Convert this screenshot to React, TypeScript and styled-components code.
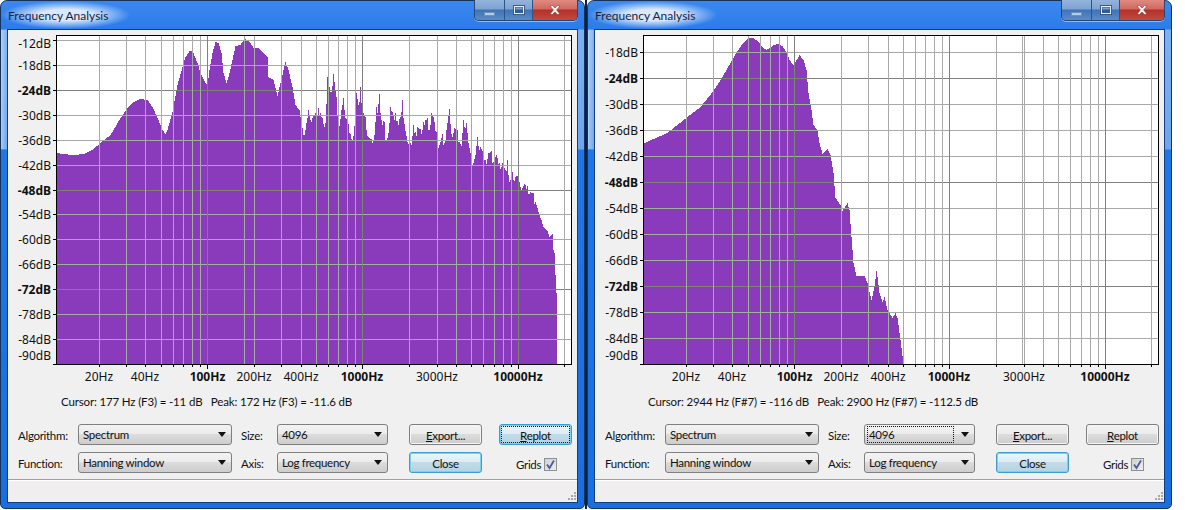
import React, { FC } from 'react';
import styled, { createGlobalStyle } from 'styled-components';

const uiFont = `Lato, "Liberation Sans", sans-serif`;

const GlobalStyle = createGlobalStyle`
  html, body {
    margin: 0;
    padding: 0;
    background: #fff;
  }
  body {
    font-family: ${uiFont};
    font-size: 11.5px;
    letter-spacing: -0.3px;
    color: #111;
  }
`;

type Point = [number, number];

interface PlotData {
  labels: string[];
  firstY: number;
  stepY: number;
  cursorX: number;
  outline: Point[];
  jitterFrom: number;
  jitterTo: number;
  cursorText: string;
}

const PLOT = { left: 56, right: 572, top: 35, bottom: 364 };

const leftOutline: Point[] = [
  [57, 153], [63, 154], [73, 155], [83, 154], [93, 149], [100, 143], [110, 135], [120, 118], [127, 108],
  [133, 102], [140, 99], [147, 100], [152, 107], [157, 118], [162, 130], [165, 134], [167, 130], [172, 112],
  [177, 85], [182, 67], [185, 57], [189, 51], [192, 51], [197, 63], [200, 73], [205, 83], [207, 85], [209, 70],
  [212, 53], [215, 42], [218, 43], [221, 53], [223, 73], [226, 83], [228, 77], [232, 60], [235, 46], [240, 45],
  [244, 38], [250, 43], [253, 48], [258, 48], [267, 57], [268, 77], [273, 80], [277, 96], [280, 83], [285, 62],
  [288, 70], [292, 87], [295, 105], [299, 110], [302, 128], [305, 130], [308, 110], [312, 118], [318, 108],
  [322, 118], [325, 123], [327, 77], [330, 92], [333, 74], [336, 97], [338, 125], [342, 105], [343, 98],
  [344, 110], [347, 115], [349, 133], [353, 136], [356, 93], [358, 105], [360, 87], [362, 110], [365, 117],
  [368, 137], [373, 140], [376, 107], [377, 113], [379, 94], [381, 120], [384, 122], [385, 140], [389, 123],
  [390, 107], [393, 115], [395, 113], [398, 125], [402, 100], [403, 118], [407, 142], [409, 133], [411, 145],
  [413, 125], [415, 132], [417, 127], [420, 129], [422, 130], [423, 122], [427, 118], [428, 130], [431, 113],
  [433, 117], [436, 132], [438, 148], [442, 134], [444, 143], [447, 123], [449, 109], [452, 137], [454, 128],
  [457, 130], [459, 142], [461, 146], [463, 120], [466, 123], [468, 143], [470, 153], [473, 163], [475, 155],
  [477, 137], [480, 147], [483, 152], [485, 160], [488, 153], [491, 151], [493, 162], [496, 155], [499, 163],
  [502, 163], [505, 170], [507, 160], [509, 182], [512, 172], [515, 177], [518, 174], [522, 188], [524, 184],
  [527, 186], [530, 192], [533, 193], [535, 202], [537, 208], [539, 215], [541, 220], [543, 227], [547, 231],
  [549, 237], [552, 234], [553, 250], [555, 255], [555, 275], [556, 293], [557, 310], [557, 364],
];

const rightOutline: Point[] = [
  [644, 143], [653, 139], [667, 133], [673, 128], [687, 117], [700, 107], [712, 92], [720, 80], [730, 63],
  [735, 54], [742, 44], [748, 38], [753, 38], [757, 41], [762, 47], [766, 50], [769, 48], [773, 45], [777, 44],
  [782, 46], [786, 52], [789, 60], [793, 65], [795, 62], [799, 55], [803, 60], [806, 70], [808, 93], [811, 110],
  [813, 125], [817, 130], [819, 143], [822, 154], [827, 149], [830, 155], [833, 173], [835, 198], [840, 205],
  [842, 211], [847, 203], [849, 210], [851, 237], [853, 263], [856, 276], [864, 276], [867, 283], [871, 300],
  [874, 287], [876, 271], [877, 277], [879, 293], [882, 302], [884, 297], [887, 310], [892, 318], [895, 313],
  [897, 318], [900, 340], [903, 364],
].map(([x, y]) => [x - 587, y] as Point);

// x of each vertical grid line, read off the log scale
const gridX: { x: number; major?: boolean }[] = [
  { x: 99 }, { x: 126 }, { x: 145 }, { x: 161 }, { x: 173 }, { x: 183 }, { x: 192 }, { x: 200 },
  { x: 207, major: true }, { x: 254 }, { x: 281 }, { x: 301 }, { x: 316 }, { x: 328 }, { x: 338 }, { x: 347 },
  { x: 355 }, { x: 362, major: true }, { x: 409 }, { x: 437 }, { x: 456 }, { x: 471 }, { x: 483 }, { x: 494 },
  { x: 503 }, { x: 511 }, { x: 518, major: true }, { x: 564 },
];

const hzLabels: [number, string, boolean][] = [
  [99, '20Hz', false],
  [145, '40Hz', false],
  [207.5, '100Hz', true],
  [254, '200Hz', false],
  [301, '400Hz', false],
  [362, '1000Hz', true],
  [437, '3000Hz', false],
  [518, '10000Hz', true],
];

const leftPlot: PlotData = {
  labels: ['-12dB', '-18dB', '-24dB', '-30dB', '-36dB', '-42dB', '-48dB', '-54dB', '-60dB', '-66dB', '-72dB', '-78dB', '-84dB', '-90dB'],
  firstY: 40,
  stepY: 24.92,
  cursorX: 244,
  outline: leftOutline,
  jitterFrom: 300,
  jitterTo: 535,
  cursorText: 'Cursor: 177 Hz (F3) = -11 dB   Peak: 172 Hz (F3) = -11.6 dB',
};

const rightPlot: PlotData = {
  labels: ['-18dB', '-24dB', '-30dB', '-36dB', '-42dB', '-48dB', '-54dB', '-60dB', '-66dB', '-72dB', '-78dB', '-84dB', '-90dB'],
  firstY: 52,
  stepY: 26,
  cursorX: 435,
  outline: rightOutline,
  jitterFrom: 9999,
  jitterTo: 9999,
  cursorText: 'Cursor: 2944 Hz (F#7) = -116 dB   Peak: 2900 Hz (F#7) = -112.5 dB',
};

// one pixel wide columns, like the app draws the spectrum
const areaPath = ({ outline, jitterFrom, jitterTo }: PlotData) => {
  const first = outline[0][0];
  const last = outline[outline.length - 1][0];
  const keys = new Set(outline.map(p => p[0]));
  let d = `M${first} ${PLOT.bottom}`;
  let seg = 0;
  for (let x = first; x < last; x++) {
    while (seg < outline.length - 2 && outline[seg + 1][0] <= x) seg++;
    const [x0, y0] = outline[seg];
    const [x1, y1] = outline[seg + 1];
    const t = x1 === x0 ? 1 : (x - x0) / (x1 - x0);
    let y = Math.round(y0 + (y1 - y0) * t);
    if (x >= jitterFrom && x <= jitterTo && !keys.has(x)) y += (x * x * 13 + x * 5) % 7;
    d += `V${Math.min(y, PLOT.bottom)}H${x + 1}`;
  }
  return `${d}V${PLOT.bottom}Z`;
};

const AxisLabel = styled.text<{ $bold?: boolean }>`
  font-family: "Noto Sans", sans-serif;
  font-size: 12px;
  letter-spacing: 0;
  font-weight: ${props => (props.$bold ? 700 : 400)};
  fill: #111;
`;

const Plot: FC<{ data: PlotData; id: string }> = ({ data, id }) => {
  const { left, right, top, bottom } = PLOT;
  const rows = data.labels.map((label, i) => ({
    label,
    y: Math.round(data.firstY + data.stepY * i),
    strong: label === '-24dB' || label === '-48dB' || label === '-72dB',
  }));
  const path = areaPath(data);

  const gridLines = (light: string, dark: string) => (
    <g shapeRendering="crispEdges" strokeWidth="1">
      {rows.map(r => (
        <line key={r.label} x1={left} x2={right} y1={r.y + 0.5} y2={r.y + 0.5} stroke={r.strong ? dark : light} />
      ))}
      {gridX.map(g => (
        <line key={g.x} x1={g.x + 0.5} x2={g.x + 0.5} y1={top} y2={bottom} stroke={g.major ? dark : light} />
      ))}
      <line x1={data.cursorX + 0.5} x2={data.cursorX + 0.5} y1={top} y2={bottom} stroke={light} />
    </g>
  );

  return (
    <ChartSvg viewBox="8 30 569 360" width="569" height="360">
      <defs>
        <clipPath id={id}>
          <path d={path} />
        </clipPath>
      </defs>
      <rect x={left} y={top} width={right - left} height={bottom - top} fill="#fff" />
      {gridLines('#a9a9a9', '#808080')}
      <path d={path} fill="#8a3bbc" shapeRendering="crispEdges" />
      <g clipPath={`url(#${id})`}>{gridLines('#a4ae9e', '#76876c')}</g>
      <rect x={left + 0.5} y={top + 0.5} width={right - left - 1} height={bottom - top} fill="none" stroke="#000" shapeRendering="crispEdges" />
      <g stroke="#000" shapeRendering="crispEdges">
        {rows.map(r => (
          <line key={r.label} x1={left - 3} x2={left} y1={r.y + 0.5} y2={r.y + 0.5} />
        ))}
        {gridX.map(g => (
          <line key={g.x} x1={g.x + 0.5} x2={g.x + 0.5} y1={bottom} y2={bottom + (g.major ? 5 : 3)} />
        ))}
      </g>
      {rows.map(r => {
        let y = r.y + 5;
        if (r.label === '-12dB') y = 48;
        if (r.label === '-90dB') y = 360;
        return (
          <AxisLabel key={r.label} x={51} y={y} textAnchor="end" $bold={r.strong}>
            {r.label}
          </AxisLabel>
        );
      })}
      {hzLabels.map(([x, text, bold]) => (
        <AxisLabel key={text} x={x} y={381} textAnchor="middle" $bold={bold}>
          {text}
        </AxisLabel>
      ))}
    </ChartSvg>
  );
};

const Desktop = styled.div`
  display: flex;
  width: 1185px;
  height: 510px;
  overflow: hidden;
  background: #fff;
`;

const Seam = styled.div`
  width: 2px;
  height: 509px;
  background: #0b2343;
`;

const WindowFrame = styled.div`
  box-sizing: border-box;
  display: flex;
  flex-direction: column;
  width: 585px;
  height: 509px;
  border: 1px solid #16335c;
  border-radius: 7px 7px 5px 5px;
  padding: 0 6px 5px;
  background:
    linear-gradient(to right, rgba(255, 255, 255, 0.4), rgba(255, 255, 255, 0)) 0 29px / 6px 119px no-repeat,
    linear-gradient(
      to bottom,
      #3a88ee 0,
      #2c7bea 28px,
      #7fb0f2 29px,
      #6fa5ee 148px,
      #1f76e6 149px,
      #1a6fe0 100%
    );
`;

const TitleBar = styled.div`
  display: flex;
  justify-content: space-between;
  align-items: flex-start;
  height: 28px;
  flex: none;
`;

const Title = styled.div`
  margin-left: -6px;
  padding: 7px 34px 0 7px;
  height: 21px;
  font-size: 12px;
  letter-spacing: 0;
  line-height: 15px;
  color: #17233a;
  background: radial-gradient(ellipse closest-side at 46% 50%, rgba(226, 238, 254, 0.95) 40%, rgba(226, 238, 254, 0) 100%);
`;

const Caption = styled.div`
  display: flex;
  height: 20px;
  margin-top: -1px;
  border: 1px solid #29486f;
  border-top: 0;
  border-radius: 0 0 5px 5px;
  overflow: hidden;
  box-shadow: 0 1px 0 rgba(255, 255, 255, 0.45);
`;

const CaptionButton = styled.div<{ $w: number; $close?: boolean }>`
  display: flex;
  align-items: center;
  justify-content: center;
  width: ${props => props.$w}px;
  background: ${props =>
    props.$close
      ? 'linear-gradient(to bottom, #e08a80 0, #cf6a60 45%, #b5302a 50%, #c04a3e 100%)'
      : 'linear-gradient(to bottom, #94b4dc 0, #7ea2d2 45%, #3f74b8 50%, #5b8ac6 100%)'};
  & + & {
    border-left: 1px solid #2f5586;
  }
`;

const Client = styled.div`
  flex: 1;
  display: flex;
  flex-direction: column;
  border: 1px solid #0f3f80;
  background: #f0f0f0;
  min-height: 0;
`;

const ChartSvg = styled.svg`
  display: block;
  flex: none;
`;

const InfoRow = styled.div`
  height: 22px;
  padding-left: 53px;
  line-height: 23px;
  letter-spacing: -0.15px;
  white-space: pre;
`;

const Controls = styled.div`
  display: flex;
  flex-direction: column;
  gap: 7px;
  margin-top: 12px;
  padding-left: 10px;
`;

const ControlRow = styled.div`
  display: flex;
  align-items: center;
  height: 21px;
`;

const FieldLabel = styled.div<{ $w: number; $gap?: number }>`
  width: ${props => props.$w}px;
  margin-left: ${props => props.$gap || 0}px;
  padding-top: 1px;
`;

const Dropdown = styled.div<{ $w: number }>`
  box-sizing: border-box;
  display: flex;
  align-items: center;
  justify-content: space-between;
  width: ${props => props.$w}px;
  height: 21px;
  padding: 0 5px 0 3px;
  border: 1px solid #7f7f7f;
  border-radius: 3px;
  background: linear-gradient(to bottom, #f3f3f3 0, #ececec 45%, #dcdcdc 50%, #cdcdcd 100%);
`;

const DropdownText = styled.span<{ $focus?: boolean }>`
  flex: 1;
  margin-right: 8px;
  padding: 1px 0 0 1px;
  line-height: 14px;
  outline: ${props => (props.$focus ? '1px dotted #111' : 'none')};
`;

const Arrow = styled.span`
  width: 0;
  height: 0;
  border-left: 4px solid transparent;
  border-right: 4px solid transparent;
  border-top: 5px solid #111;
`;

const PushButton = styled.div<{ $gap: number; $active?: boolean; $dotted?: boolean }>`
  box-sizing: border-box;
  display: flex;
  align-items: center;
  justify-content: center;
  width: 73px;
  height: 21px;
  margin-left: ${props => props.$gap}px;
  padding-top: 1px;
  border: 1px solid ${props => (props.$active ? '#3c9bd0' : '#7f7f7f')};
  border-radius: 3px;
  background: ${props =>
    props.$active
      ? 'linear-gradient(to bottom, #eaf6fb 0, #dcecf5 45%, #c3dbe8 50%, #b4d3e4 100%)'
      : 'linear-gradient(to bottom, #f3f3f3 0, #ececec 45%, #dcdcdc 50%, #cdcdcd 100%)'};
  box-shadow: ${props => (props.$active ? 'inset 0 0 0 1px #7fd0f0' : 'inset 0 0 0 1px #f5f5f5')};
  outline: ${props => (props.$dotted ? '1px dotted #111' : 'none')};
  outline-offset: -3px;
`;

const Mnemonic = styled.span`
  text-decoration: underline;
`;

const GridsField = styled.div`
  display: flex;
  align-items: center;
  justify-content: space-between;
  width: 41px;
  margin: 4px 0 0 34px;
`;

const Checkbox = styled.div`
  box-sizing: border-box;
  display: flex;
  align-items: center;
  justify-content: center;
  width: 13px;
  height: 13px;
  border: 1px solid #8e8f8f;
  background: linear-gradient(135deg, #d0d0d0, #eeeeee);
`;

const StatusBar = styled.div`
  flex: 1;
  display: flex;
  align-items: flex-end;
  justify-content: flex-end;
  margin-top: 6px;
  border-top: 1px solid #a0a0a0;
  box-shadow: inset 0 1px 0 #ffffff;
  background: #f0eeee;
  padding: 0 1px 2px 0;
`;

const GRIP: Point[] = [[6, 0], [3, 3], [6, 3], [0, 6], [3, 6], [6, 6]];

const FrequencyWindow: FC<{ data: PlotData; id: string; focusSize?: boolean; focusReplot?: boolean }> = ({
  data,
  id,
  focusSize,
  focusReplot,
}) => (
  <WindowFrame>
    <TitleBar>
      <Title>Frequency Analysis</Title>
      <Caption>
        <CaptionButton $w={29}>
          <svg width="11" height="4" style={{ marginTop: 7 }}>
            <rect x="0.5" y="0.5" width="10" height="3" fill="#b8cce4" stroke="#6f8fb8" />
          </svg>
        </CaptionButton>
        <CaptionButton $w={27}>
          <svg width="12" height="10">
            <rect x="0.5" y="0.5" width="11" height="9" fill="#2f5d9c" stroke="#40597d" />
            <rect x="1.5" y="1.5" width="9" height="7" fill="none" stroke="#e8eef6" />
            <rect x="2.5" y="2.5" width="7" height="2" fill="#7aa0d0" />
          </svg>
        </CaptionButton>
        <CaptionButton $w={44} $close>
          <svg width="12" height="10" viewBox="0 0 12 10">
            <path d="M1 1 L3.5 0.5 L6 3 L8.5 0.5 L11 1 L7.6 5 L11 9 L8.5 9.5 L6 7 L3.5 9.5 L1 9 L4.4 5 Z" fill="#f4f2f0" stroke="#7a2a24" strokeWidth="0.5" />
          </svg>
        </CaptionButton>
      </Caption>
    </TitleBar>
    <Client>
      <Plot data={data} id={id} />
      <InfoRow>{data.cursorText}</InfoRow>
      <Controls>
        <ControlRow>
          <FieldLabel $w={60}>Algorithm:</FieldLabel>
          <Dropdown $w={154}>
            <DropdownText>Spectrum</DropdownText>
            <Arrow />
          </Dropdown>
          <FieldLabel $w={36} $gap={9}>Size:</FieldLabel>
          <Dropdown $w={111}>
            <DropdownText $focus={focusSize}>4096</DropdownText>
            <Arrow />
          </Dropdown>
          <PushButton $gap={21}>
            <span><Mnemonic>E</Mnemonic>xport...</span>
          </PushButton>
          <PushButton $gap={17} $active={focusReplot} $dotted={focusReplot}>
            <span><Mnemonic>R</Mnemonic>eplot</span>
          </PushButton>
        </ControlRow>
        <ControlRow>
          <FieldLabel $w={60}>Function:</FieldLabel>
          <Dropdown $w={154}>
            <DropdownText>Hanning window</DropdownText>
            <Arrow />
          </Dropdown>
          <FieldLabel $w={36} $gap={9}>Axis:</FieldLabel>
          <Dropdown $w={111}>
            <DropdownText>Log frequency</DropdownText>
            <Arrow />
          </Dropdown>
          <PushButton $gap={21} $active>Close</PushButton>
          <GridsField>
            Grids
            <Checkbox>
              <svg width="11" height="11" viewBox="0 0 11 11">
                <path d="M2 5.5 L4.5 9 L9 1.5" fill="none" stroke="#4a5f97" strokeWidth="1.8" />
              </svg>
            </Checkbox>
          </GridsField>
        </ControlRow>
      </Controls>
      <StatusBar>
        <svg width="8" height="8">
          {GRIP.map(([x, y]) => (
            <rect key={`${x}-${y}`} x={x} y={y} width="2" height="2" fill="#a8a8a8" />
          ))}
        </svg>
      </StatusBar>
    </Client>
  </WindowFrame>
);

const App: FC = () => (
  <Desktop>
    <GlobalStyle />
    <FrequencyWindow data={leftPlot} id="left-area" focusReplot />
    <Seam />
    <FrequencyWindow data={rightPlot} id="right-area" focusSize />
  </Desktop>
);

export default App;
